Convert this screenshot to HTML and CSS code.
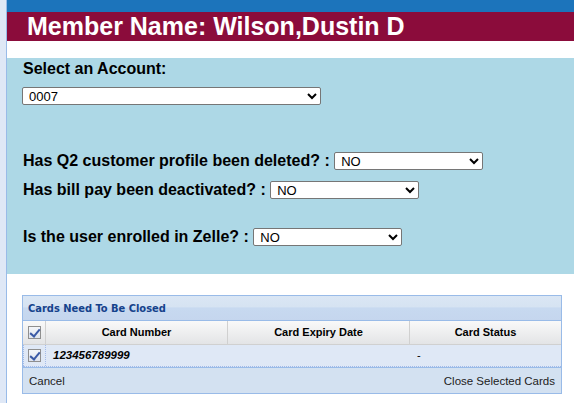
FILE: index.html
```html
<!DOCTYPE html>
<html>
<head>
<meta charset="utf-8">
<link rel="stylesheet" href="styles.css">
</head>
<body>
<div class="frame">
  <div class="topbar"></div>
  <div class="member">Member Name: Wilson,Dustin D</div>
  <div class="spacer"></div>
  <div class="form">
    <div class="label acct">Select an Account:</div>
    <select class="sel wide"><option>0007</option></select>
    <div class="row q2"><span class="label">Has Q2 customer profile been deleted? :</span> <select class="sel"><option>NO</option></select></div>
    <div class="row bp"><span class="label">Has bill pay been deactivated? :</span> <select class="sel"><option>NO</option></select></div>
    <div class="row ze"><span class="label">Is the user enrolled in Zelle? :</span> <select class="sel"><option>NO</option></select></div>
  </div>
  <div class="lower">
    <div class="grid">
      <div class="gtitle">Cards Need To Be Closed</div>
      <div class="ghead">
        <div class="cchk"><span class="chk"></span></div>
        <div class="c1">Card Number</div>
        <div class="c2">Card Expiry Date</div>
        <div class="c3">Card Status</div>
      </div>
      <div class="grow">
        <div class="cchk"><span class="chk"></span></div>
        <div class="c1 num">123456789999</div>
        <div class="c2"></div>
        <div class="c3 dash">-</div>
      </div>
      <div class="gfoot">
        <span>Cancel</span>
        <span>Close Selected Cards</span>
      </div>
    </div>
  </div>
</div>
</body>
</html>
```

FILE: styles.css
```css
html, body {
  margin: 0;
  padding: 0;
}
body {
  background: #dfe8f6;
  padding-left: 6px;
  height: 403px;
  overflow: hidden;
  font-family: "Liberation Sans", Arial, sans-serif;
}
.frame {
  border-left: 1px solid #99bbe8;
  background: #fff;
  height: 403px;
}
.topbar {
  height: 12px;
  background: #1c74bb;
}
.member {
  height: 29px;
  background: #8b0c3b;
  color: #fff;
  font-weight: bold;
  font-size: 25px;
  line-height: 29px;
  padding-left: 20px;
}
.spacer {
  height: 17px;
}
.form {
  background: #add8e6;
  height: 216px;
  padding-left: 16px;
  box-sizing: border-box;
  padding-top: 1px;
}
.label {
  font-weight: bold;
  font-size: 16px;
  color: #000;
}
.acct {
  line-height: 20px;
  margin-top: 0;
}
.sel {
  font-family: "Liberation Sans", Arial, sans-serif;
  font-size: 13px;
  height: 18px;
  width: 149px;
  border: 1px solid #767676;
  border-radius: 2px;
  background: #fff;
  padding: 0 0 0 2px;
  margin: 0;
  color: #000;
  vertical-align: baseline;
}
.wide {
  width: 299px;
  margin-top: 8px;
  margin-left: -1px;
  display: block;
}
.row {
  height: 20px;
  line-height: 20px;
}
.q2 { margin-top: 46px; }
.bp { margin-top: 9px; }
.ze { margin-top: 27px; }
.lower {
  padding: 21px 12px 0 15px;
}
.grid {
  border: 1px solid #99bbe8;
  width: 538px;
  font-size: 11px;
}
.gtitle {
  height: 25px;
  line-height: 25px;
  background: linear-gradient(#dae6f4 0%, #d6e3f2 45%, #c7d9f0 50%, #c5d6ee 100%);
  border-bottom: 1px solid #99bbe8;
  color: #15428b;
  font-family: "DejaVu Sans Condensed", "DejaVu Sans", Tahoma, sans-serif;
  font-stretch: condensed;
  font-weight: bold;
  font-size: 11px;
  padding-left: 5px;
  box-sizing: border-box;
}
.ghead, .grow {
  display: grid;
  grid-template-columns: 23px 182px 182px 151px;
}
.ghead {
  height: 23px;
  background: linear-gradient(#f9f9f9, #e3e4e6);
  border-bottom: 1px solid #d0d0d0;
  font-weight: bold;
  color: #000;
}
.ghead > div {
  border-right: 1px solid #d0d0d0;
  line-height: 23px;
  text-align: center;
}
.ghead > div.c3 {
  border-right: none;
}
.grow {
  height: 21px;
  background: #dfe8f6;
  border-bottom: 1px dotted #a3bae9;
  line-height: 21px;
}
.cchk {
  display: flex;
  align-items: center;
  justify-content: center;
}
.grow .cchk {
  border: 1px dotted #a3bae9;
  border-bottom: none;
  border-top: none;
}
.chk {
  width: 11px;
  height: 11px;
  border: 1px solid #8f8f8f;
  background: linear-gradient(#f4f6fa, #dfe4ee);
  position: relative;
}
.chk::after {
  content: "";
  position: absolute;
  left: 3px;
  top: 0px;
  width: 4px;
  height: 8px;
  border: solid #3b5aa6;
  border-width: 0 2px 2px 0;
  transform: rotate(40deg);
}
.num {
  font-weight: bold;
  font-style: italic;
  font-size: 11.5px;
  padding-left: 7px;
}
.dash {
  padding-left: 7px;
}
.gfoot {
  height: 25px;
  background: #d3e1f1;
  border-top: 1px solid #99bbe8;
  display: flex;
  justify-content: space-between;
  align-items: center;
  padding: 0 6px 0 6px;
  color: #222;
  font-size: 11.5px;
}
```
